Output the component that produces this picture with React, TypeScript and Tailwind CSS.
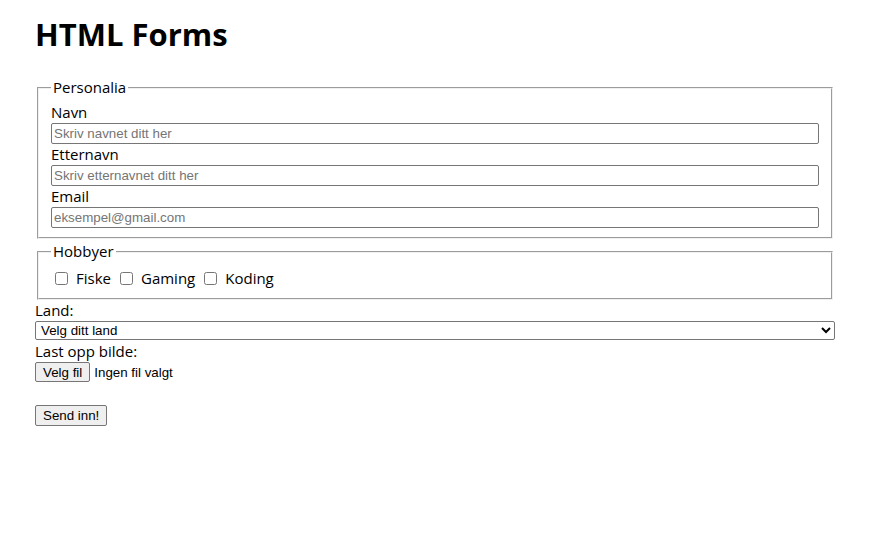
import React from 'react';

const inputCls =
    "block w-full h-[21px] border border-[#767676] rounded-[2px] bg-white px-[2px] text-[13.33px] leading-[15px] text-black placeholder:text-[#757575] [font-family:'Liberation_Sans',Arial,sans-serif]";

const btnCls =
    "h-[20px] px-[7px] border border-[#767676] rounded-[2px] bg-[#efefef] text-[13.33px] leading-[15px] text-black [font-family:'Liberation_Sans',Arial,sans-serif]";

const fieldsetCls =
    "mx-[2px] border-2 [border-style:groove] border-[#f0f0f0] px-[12px]";

export default function App() {
    return (
        <div className="min-h-screen bg-white text-black text-[15px] leading-[21px] [font-family:'Open_Sans',sans-serif]">
            <div className="w-[800px] ml-[35px] pt-[14px]">
                <h1 className="text-[31px] leading-[40px] font-bold">HTML Forms</h1>

                <form className="mt-[23px]">
                    {/* Personalia */}
                    <fieldset className={`${fieldsetCls} pt-[4px] pb-[9px]`}>
                        <legend className="px-[2px]">Personalia</legend>
                        <label htmlFor="navn" className="block">Navn</label>
                        <input id="navn" type="text" placeholder="Skriv navnet ditt her" className={inputCls} />
                        <label htmlFor="etternavn" className="block">Etternavn</label>
                        <input id="etternavn" type="text" placeholder="Skriv etternavnet ditt her" className={inputCls} />
                        <label htmlFor="email" className="block">Email</label>
                        <input id="email" type="email" placeholder="eksempel@gmail.com" className={inputCls} />
                    </fieldset>

                    {/* Hobbyer */}
                    <fieldset className={`${fieldsetCls} mt-[2px] pt-[6px] pb-[9px]`}>
                        <legend className="px-[2px]">Hobbyer</legend>
                        <div className="flex items-center h-[21px]">
                            <input id="fiske" type="checkbox" className="w-[13px] h-[13px] ml-[4px] mr-[8px]" />
                            <label htmlFor="fiske" className="mr-[9px]">Fiske</label>
                            <input id="gaming" type="checkbox" className="w-[13px] h-[13px] mr-[8px]" />
                            <label htmlFor="gaming" className="mr-[9px]">Gaming</label>
                            <input id="koding" type="checkbox" className="w-[13px] h-[13px] mr-[8px]" />
                            <label htmlFor="koding">Koding</label>
                        </div>
                    </fieldset>

                    <label htmlFor="land" className="block">Land:</label>
                    <select
                        id="land"
                        className="block w-[800px] h-[19px] border border-[#767676] rounded-[2px] bg-white pl-[1px] text-[13.33px] leading-[15px] text-black [font-family:'Liberation_Sans',Arial,sans-serif]"
                    >
                        <option>Velg ditt land</option>
                        <option>Norge</option>
                        <option>Sverige</option>
                        <option>Danmark</option>
                    </select>

                    <label className="block mt-[1px]">Last opp bilde:</label>
                    <div className="flex items-center h-[20px]">
                        <button type="button" className={btnCls}>Velg fil</button>
                        <span className="ml-[4px] text-[13.33px] [font-family:'Liberation_Sans',Arial,sans-serif]">Ingen fil valgt</span>
                    </div>

                    <button type="submit" className={`${btnCls} h-[21px] mt-[23px]`}>Send inn!</button>
                </form>
            </div>
        </div>
    );
}
